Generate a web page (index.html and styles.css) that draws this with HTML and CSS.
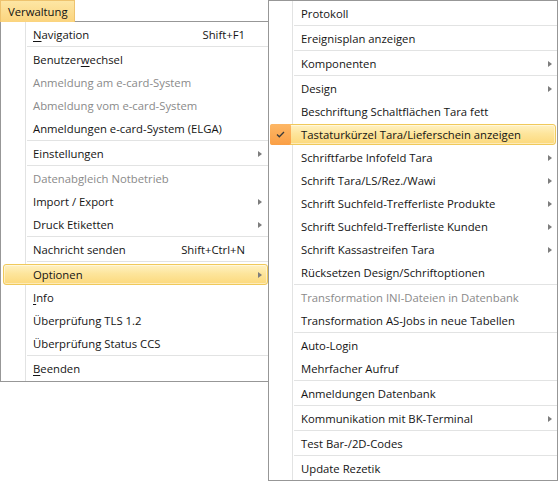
FILE: index.html
```html
<!DOCTYPE html>
<html lang="de">
<head>
  <meta charset="UTF-8" />
  <title>Verwaltung</title>
  <meta name="viewport" content="width=device-width, initial-scale=1.0" />
  <link rel="stylesheet" href="styles.css">
</head>
<body>
  <div class="screen">
    <div class="main-col">
      <div class="menubar">
        <span class="tab">Verwaltung</span>
      </div>
      <div class="menu menu-main">
        <div class="item"><span class="icon"></span><span class="label"><u>N</u>avigation</span><span class="key">Shift+F1</span></div>
        <div class="sep"></div>
        <div class="item"><span class="icon"></span><span class="label">Benutzer<u>w</u>echsel</span></div>
        <div class="item off"><span class="icon"></span><span class="label">Anmeldung am e-card-System</span></div>
        <div class="item off"><span class="icon"></span><span class="label">Abmeldung vom e-card-System</span></div>
        <div class="item"><span class="icon"></span><span class="label">Anmeldungen e-card-System (ELGA)</span></div>
        <div class="sep"></div>
        <div class="item"><span class="icon"></span><span class="label">Einstellungen</span><span class="arrow"></span></div>
        <div class="sep"></div>
        <div class="item off"><span class="icon"></span><span class="label">Datenabgleich Notbetrieb</span></div>
        <div class="item"><span class="icon"></span><span class="label">Import / Export</span><span class="arrow"></span></div>
        <div class="item"><span class="icon"></span><span class="label">Druck Etiketten</span><span class="arrow"></span></div>
        <div class="sep"></div>
        <div class="item"><span class="icon"></span><span class="label">Nachricht senden</span><span class="key">Shift+Ctrl+N</span></div>
        <div class="sep"></div>
        <div class="item hot"><span class="icon"></span><span class="label">Optionen</span><span class="arrow"></span></div>
        <div class="item"><span class="icon"></span><span class="label"><u>I</u>nfo</span></div>
        <div class="item"><span class="icon"></span><span class="label">Überprüfung TLS 1.2</span></div>
        <div class="item"><span class="icon"></span><span class="label">Überprüfung Status CCS</span></div>
        <div class="sep"></div>
        <div class="item"><span class="icon"></span><span class="label"><u>B</u>eenden</span></div>
      </div>
    </div>

    <div class="menu menu-sub">
      <div class="item"><span class="icon"></span><span class="label">Protokoll</span></div>
      <div class="sep"></div>
      <div class="item"><span class="icon"></span><span class="label">Ereignisplan anzeigen</span></div>
      <div class="sep"></div>
      <div class="item"><span class="icon"></span><span class="label">Komponenten</span><span class="arrow"></span></div>
      <div class="sep"></div>
      <div class="item"><span class="icon"></span><span class="label">Design</span><span class="arrow"></span></div>
      <div class="item"><span class="icon"></span><span class="label">Beschriftung Schaltflächen Tara fett</span></div>
      <div class="item hot"><span class="icon"><span class="check"><svg width="9" height="7" viewBox="0 0 9 7"><path d="M1 3.5 L3.3 5.8 L8 1" fill="none" stroke="#3a3a3a" stroke-width="1.3"/></svg></span></span><span class="label">Tastaturkürzel Tara/Lieferschein anzeigen</span></div>
      <div class="item"><span class="icon"></span><span class="label">Schriftfarbe Infofeld Tara</span><span class="arrow"></span></div>
      <div class="item"><span class="icon"></span><span class="label">Schrift Tara/LS/Rez./Wawi</span><span class="arrow"></span></div>
      <div class="item"><span class="icon"></span><span class="label">Schrift Suchfeld-Trefferliste Produkte</span><span class="arrow"></span></div>
      <div class="item"><span class="icon"></span><span class="label">Schrift Suchfeld-Trefferliste Kunden</span><span class="arrow"></span></div>
      <div class="item"><span class="icon"></span><span class="label">Schrift Kassastreifen Tara</span><span class="arrow"></span></div>
      <div class="item"><span class="icon"></span><span class="label">Rücksetzen Design/Schriftoptionen</span></div>
      <div class="sep"></div>
      <div class="item off"><span class="icon"></span><span class="label">Transformation INI-Dateien in Datenbank</span></div>
      <div class="item"><span class="icon"></span><span class="label">Transformation AS-Jobs in neue Tabellen</span></div>
      <div class="sep"></div>
      <div class="item"><span class="icon"></span><span class="label">Auto-Login</span></div>
      <div class="item"><span class="icon"></span><span class="label">Mehrfacher Aufruf</span></div>
      <div class="sep"></div>
      <div class="item"><span class="icon"></span><span class="label">Anmeldungen Datenbank</span></div>
      <div class="sep"></div>
      <div class="item"><span class="icon"></span><span class="label">Kommunikation mit BK-Terminal</span><span class="arrow"></span></div>
      <div class="sep"></div>
      <div class="item"><span class="icon"></span><span class="label">Test Bar-/2D-Codes</span></div>
      <div class="sep"></div>
      <div class="item"><span class="icon"></span><span class="label">Update Rezetik</span></div>
    </div>
  </div>
</body>
</html>
```

FILE: styles.css
```css
body {
  margin: 0;
  background: #ffffff;
  font-family: "Open Sans", "Noto Sans", sans-serif;
  font-size: 11.3px;
  color: #141414;
  overflow: hidden;
}
.screen {
  display: flex;
  align-items: flex-start;
}
.main-col {
  width: 268px;
  flex-shrink: 0;
}
.menubar {
  height: 21px;
  display: flex;
}
.tab {
  position: relative;
  z-index: 1;
  box-sizing: border-box;
  width: 75px;
  height: 22px;
  padding-left: 7px;
  line-height: 21px;
  border: 1px solid #eec36e;
  border-bottom: none;
  background: linear-gradient(#fde6a4, #fbd47e);
  color: #111;
}

/* menus: flex columns so item margins stay separate */
.menu {
  display: flex;
  flex-direction: column;
  background-color: #fff;
  border: 1px solid #979797;
}
.menu-main {
  border-right: none;
  padding: 1px 0 1px 0;
  background-image: linear-gradient(to right, transparent 24px, #e2e3e3 24px, #e2e3e3 25px, transparent 25px);
}
.menu-sub {
  width: 288px;
  flex-shrink: 0;
  padding-top: 1px;
  background-image: linear-gradient(to right, transparent 23px, #e2e3e3 23px, #e2e3e3 24px, transparent 24px);
}
.item {
  display: flex;
  align-items: center;
  height: 19px;
  margin: 1px 0 1px 2px;
  border: 1px solid transparent;
  border-radius: 3px;
  white-space: nowrap;
}
.menu-sub .item {
  margin: 1px 1px 1px 1px;
}
.item .icon {
  width: 29px;
  flex-shrink: 0;
  align-self: stretch;
  display: flex;
}
.menu-sub .item .icon {
  width: 30px;
}
.item .label {
  flex: 1;
}
.item u {
  text-decoration-thickness: 1px;
  text-underline-offset: 2px;
}
.item.off {
  color: #8a8a8a;
}
.item .key {
  margin-right: 22px;
}
.arrow {
  width: 0;
  height: 0;
  margin-right: 5px;
  border-left: 4px solid #7d7d7d;
  border-top: 3.5px solid transparent;
  border-bottom: 3.5px solid transparent;
}
.menu-sub .arrow {
  margin-right: 3px;
}
.item.hot {
  border-color: #f0c95a;
  background: linear-gradient(#fff1c2, #fde59c 45%, #fcd97c);
  box-shadow: inset 0 0 0 1px rgba(255, 255, 255, 0.45);
}
.check {
  box-sizing: border-box;
  width: 21px;
  margin: -1px 0 -1px -1px;
  border-radius: 2px;
  background: linear-gradient(#fdb766, #fa9f45);
  display: flex;
  align-items: center;
  justify-content: center;
}
.sep {
  flex-shrink: 0;
  height: 1px;
  margin-left: 26px;
  border-top: 1px solid #e2e3e3;
}
.menu-sub .sep {
  margin-left: 25px;
}
```
